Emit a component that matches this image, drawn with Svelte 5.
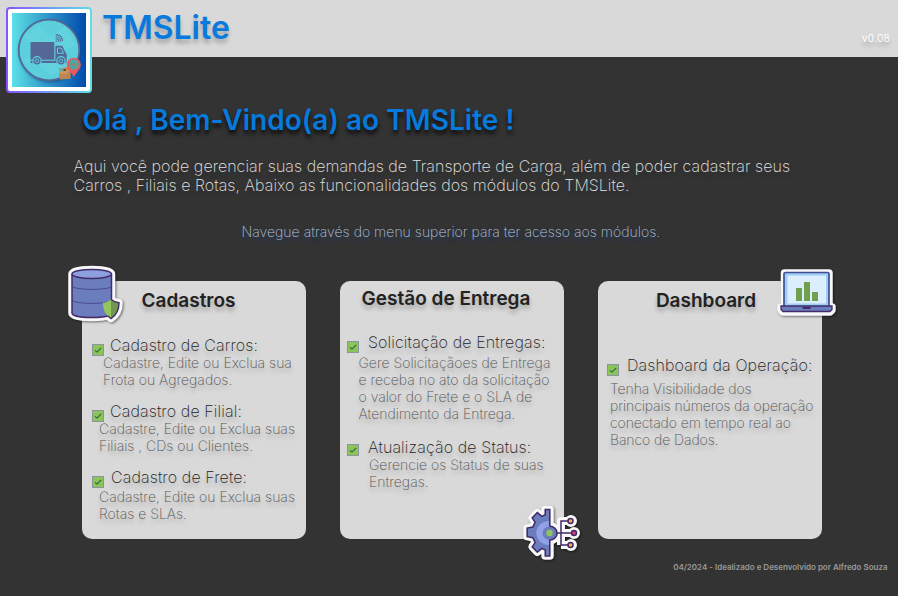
<script>
  const cards = [
    {
      id: 'cadastros', title: 'Cadastros', icon: 'database',
      items: [
        { gap: 0, name: 'Cadastro de Carros:', nameX: 18, textX: 11, textGap: -1, lines: ['Cadastre, Edite ou Exclua sua', 'Frota ou Agregados.'] },
        { gap: 14, name: 'Cadastro de Filial:', nameX: 18, textX: 7, textGap: -1, lines: ['Cadastre, Edite ou Exclua suas', 'Filiais , CDs ou Clientes.'] },
        { gap: 14, name: 'Cadastro de Frete:', nameX: 19, textX: 7, textGap: 1, lines: ['Cadastre, Edite ou Exclua suas', 'Rotas e SLAs.'] }
      ]
    },
    {
      id: 'gestao', title: 'Gestão de Entrega', icon: 'gear',
      items: [
        { gap: 0, name: 'Solicitação de Entregas:', nameX: 27, textX: 17.5, textGap: 2, lines: ['Gere Solicitaçãoes de Entrega', 'e receba no ato da solicitação', 'o valor do Frete e o SLA de', 'Atendimento da Entrega.'] },
        { gap: 16, name: 'Atualização de Status:', nameX: 27, textX: 28, textGap: -1, lines: ['Gerencie os Status de suas', 'Entregas.'] }
      ]
    },
    {
      id: 'dashboard', title: 'Dashboard', icon: 'laptop',
      items: [
        { gap: 0, name: 'Dashboard da Operação:', nameX: 29, textX: 12, textGap: 5, lines: ['Tenha Visibilidade dos', 'principais números da operação', 'conectado em tempo real ao', 'Banco de Dados.'] }
      ]
    }
  ];
</script>

<div class="page">
  <header>
    <div class="logo">
      <svg viewBox="0 0 86 86" width="86" height="86">
        <defs>
          <linearGradient id="frame"><stop offset="0" stop-color="#8552ff" /><stop offset="1" stop-color="#5ee0e6" /></linearGradient>
          <linearGradient id="sea"><stop offset="0" stop-color="#5de0e6" /><stop offset="1" stop-color="#004aad" /></linearGradient>
          <filter id="soft" x="-20%" y="-20%" width="140%" height="140%"><feGaussianBlur stdDeviation="1.5" /></filter>
        </defs>
        <rect width="86" height="86" rx="4" fill="url(#frame)" />
        <rect x="2" y="2" width="82" height="82" rx="2" fill="#fff" />
        <rect x="6" y="6" width="74" height="74" fill="url(#sea)" />
        <circle cx="44" cy="44.5" r="31" fill="#123c70" opacity=".6" filter="url(#soft)" />
        <circle cx="43" cy="43" r="30.3" fill="#5ccfdc" stroke="#536896" stroke-width="1.8" />
        <path d="M18 29 34 18 44 31 59 20 69 37 55 46 68 59 45 68 31 55 17 56 28 42Z" fill="#8af0eb" opacity=".13" />
        <path d="M34 18 28 42 44 31 55 46 31 55 45 68M59 20 44 31M55 46 69 37" fill="none" stroke="#86e6e5" stroke-width=".6" opacity=".25" />
        <g fill="#536896">
          <path d="M24.5 35h23.8v17.8H24.5zM49.4 38.8h6.9l3.4 7.3 1 1.2v6.7H49.4zM24.5 53.8h36v2.1h-36z" />
          <circle cx="31" cy="53.8" r="4.2" stroke="#5ccfdc" stroke-width="1.2" /><circle cx="55" cy="53.8" r="4.2" stroke="#5ccfdc" stroke-width="1.2" />
        </g>
        <path d="M51.5 41h3.8l2.3 5.3h-6.1z" fill="none" stroke="#5ccfdc" stroke-width="1" />
        <circle cx="31" cy="53.8" r="1.8" fill="#536896" stroke="#5ccfdc" stroke-width=".9" /><circle cx="55" cy="53.8" r="1.8" fill="#536896" stroke="#5ccfdc" stroke-width=".9" />
        <circle cx="50.3" cy="34.2" r=".8" fill="#536896" />
        <path d="M49.5 31.8a3 3 0 0 1 3.5 3M49.6 29.7a5.5 5.5 0 0 1 5.3 5M49.7 27.6a7.5 7.5 0 0 1 7 6.2" fill="none" stroke="#536896" stroke-width="1.1" />
        <path d="M55 61.5l8-2 1.6 4v8.2l-10.7.8-1-5.5z" fill="#bd854f" />
        <path d="M53 67l2-5.5 8.5 1.5-3 4z" fill="#cf955c" /><path d="M52 61l4 .5 2 3-4-.2z" fill="#5cb0a8" /><path d="M57.5 62h2.5v2h-2.5z" fill="#5c4b36" />
        <path d="M67.8 50.7a7 7 0 0 0-7 7c0 4.6 5 7.8 7 12.5 2-4.7 7-7.9 7-12.5a7 7 0 0 0-7-7z" fill="#e55b61" />
        <circle cx="67.8" cy="57.5" r="4.9" fill="#38b3ac" />
        <path d="M64 55l7.6 5M64 60l7.4-5M67.8 52.7v9.6M63 57.5h9.6" stroke="#b0756f" stroke-width=".7" />
      </svg>
    </div>
    <div class="brand">TMSLite</div>
    <div class="version">v0.08</div>
  </header>

  <main>
    <h1>Olá , Bem-Vindo(a) ao TMSLite !</h1>
    <p class="intro">Aqui você pode gerenciar suas demandas de Transporte de Carga, além de poder cadastrar seus<br />Carros , Filiais e Rotas, Abaixo as funcionalidades dos módulos do TMSLite.</p>
    <p class="hint">Navegue através do menu superior para ter acesso aos módulos.</p>

    <div class="cards">
      {#each cards as card}
        <section class={card.id}>
          <h2>{card.title}</h2>
          <div class="items">
            {#each card.items as item}
              <article style:margin-top="{item.gap}px">
                <svg class="check" viewBox="0 0 12 12" width="12" height="12">
                  <rect x=".5" y=".5" width="11" height="11" fill="#8dc45a" stroke="#8a95a0" />
                  <path d="M3 6.4 5 8.1 9.2 3.8" fill="none" stroke="#20643c" stroke-width="1.1" />
                </svg>
                <h3 style:padding-left="{item.nameX}px">{item.name}</h3>
                <p style:padding-left="{item.textX}px" style:margin-top="{item.textGap}px">
                  {#each item.lines as line}<span>{line}</span>{/each}
                </p>
              </article>
            {/each}
          </div>

          {#if card.icon === 'database'}
            <svg class="sticker" viewBox="0 0 60 60" width="60" height="60">
              <g fill="#f8f8fa" stroke="#f8f8fa" stroke-width="7.5" stroke-linejoin="round">
                <path d="M6 10C6 4 45.5 4 45.5 10V49C45.5 55 6 55 6 49Z" />
                <path d="M45 35.5c2.5 2 5 3 8 3.2 0 7-2.5 12.3-8 16-5.5-3.7-8-9-8-16 3-.2 5.5-1.2 8-3.2z" />
              </g>
              <path d="M6 10V49C6 55 45.5 55 45.5 49V10" fill="#6c7dbd" stroke="#412b68" stroke-width="1.5" />
              <ellipse cx="25.75" cy="10" rx="19.75" ry="4.500" fill="#8e9fe0" stroke="#412b68" stroke-width="1.5" />
              <path d="M6.5 22c0 4.5 39 4.5 39 0M6.5 36c0 4.5 39 4.5 39 0" fill="none" stroke="#484a8c" stroke-width="1" />
              <path d="M45 35.5c2.5 2 5 3 8 3.2 0 7-2.5 12.3-8 16-5.5-3.7-8-9-8-16 3-.2 5.5-1.2 8-3.2z" fill="#92c65c" />
              <path d="M45 35.5c2.5 2 5 3 8 3.2 0 7-2.5 12.3-8 16z" fill="#729653" />
              <path d="M45 35.5c2.5 2 5 3 8 3.2 0 7-2.5 12.3-8 16l-3-2.7" fill="none" stroke="#412b68" stroke-width="1.4" />
            </svg>
          {:else if card.icon === 'gear'}
            <svg class="sticker" viewBox="0 0 60 56" width="60" height="56">
              <g fill="#f8f8fa" stroke="#f8f8fa" stroke-width="7" stroke-linejoin="round">
                <path transform="translate(-3.3 -1.5) scale(1.13 1.07)" d="M27.5 5.5h-4v5l-3 1.5-4-3.5-4.5 5 2.5 4-2 4.5-5 1v8l5 1 2 4.5-2.5 4 4.5 5 4-3.5 3 1.5v5.5h4V35c8-.5 8-13.5 0-14.5z" />
                <path d="M27 28h26M39 40V16h10M39 40h10" fill="none" stroke-width="8" /><circle cx="49" cy="16" r="2.5" /><circle cx="52" cy="28" r="2.5" /><circle cx="49" cy="40" r="2.5" />
              </g>
              <g transform="translate(-3.3 -1.5) scale(1.13 1.07)">
                <path d="M27.5 5.5h-4v5l-3 1.5-4-3.5-4.5 5 2.5 4-2 4.5-5 1v8l5 1 2 4.5-2.5 4 4.5 5 4-3.5 3 1.5v5.5h4V35z" fill="#6c7dbd" stroke="#412b68" stroke-width="1.4" />
                <path d="M26.8 16.300a11.2 11.2 0 0 0 0 22.4z" fill="#91a1e6" />
                <path d="M27.5 21.3a6.4 6.4 0 0 1 0 12.8a6.4 6.4 0 0 1-6.4-6.4a6.4 6.4 0 0 1 6.4-6.4z" fill="#6c7dbd" />
                <path d="M27.5 21.3a6.4 6.4 0 0 1 0 12.8" fill="none" stroke="#412b68" stroke-width="1.5" />
              </g>
              <circle cx="27.5" cy="28" r="3.2" fill="#8fc65a" />
              <path d="M35 28h17M39 28V16h10M39 28v12h10" fill="none" stroke="#412b68" stroke-width="1.5" />
              <g stroke="#412b68" stroke-width="1.5"><circle cx="48.5" cy="16" r="2.5" fill="#faae48" /><circle cx="52" cy="28" r="2.5" fill="#df3b74" /><circle cx="48.5" cy="40" r="2.5" fill="#faae48" /></g>
            </svg>
          {:else}
            <svg class="sticker" viewBox="0 0 60 54" width="60" height="54">
              <path d="M7.5 7h44.5v34h3v3l-2 2H6l-2-2v-3h3.5z" fill="#f8f8fa" stroke="#f8f8fa" stroke-width="7.5" stroke-linejoin="round" />
              <rect x="7" y="6.5" width="45" height="35" rx="1.5" fill="#9bcff8" stroke="#454d91" stroke-width="1.7" />
              <rect x="10.5" y="9.5" width="38.5" height="28" fill="#dceefe" />
              <path d="M19 22h6v13h-6zM27 16h6v19h-6zM35 26h6v9h-6z" fill="#709f4d" />
              <path d="M4 40h51v3.5l-2 2H6l-2-2z" fill="#6c7dbd" stroke="#412b68" stroke-width="1.3" />
              <path d="M25 41h9l-1 2h-7z" fill="#412b68" />
            </svg>
          {/if}
        </section>
      {/each}
    </div>
  </main>
  <footer>04/2024 - Idealizado e Desenvolvido por Alfredo Souza</footer>
</div>

<style>
  :global(body) { background: #333; }
  .page { box-sizing: border-box; width: 898px; height: 596px; display: flex; flex-direction: column; background: #333; font-family: Inter, sans-serif; overflow: hidden; }
  header { box-sizing: border-box; height: 57px; flex: none; padding: 7px 8px 0 6px; display: flex; background: #d9d9d9; }
  .logo { width: 86px; height: 86px; flex: none; }
  .brand { margin: 1px auto 0 10px; font-size: 32px; line-height: 39px; font-weight: 600; color: #077add; text-shadow: 0 4px 4px rgba(0,0,0,.25); white-space: nowrap; }
  .version { margin-top: 25px; font-size: 10px; line-height: 13px; color: #fff; letter-spacing: .25px; text-shadow: 0 4px 4px rgba(0,0,0,.25); }
  main { padding: 45px 0 0; flex: none; }
  h1, h2, h3, p { margin: 0; white-space: nowrap; }
  h1 { margin-left: 82.5px; height: 36px; line-height: 36px; font-size: 28px; font-weight: 600; letter-spacing: .04px; color: #077add; text-shadow: 0 4px 4px rgba(0,0,0,.8); }
  .intro { margin: 19px 0 0 73.5px; font-size: 16px; line-height: 19px; font-weight: 200; letter-spacing: .05px; color: #e4e4e4; text-shadow: 0 4px 4px rgba(0,0,0,.25); }
  .hint { margin: 28px 0 0 241.5px; font-size: 14px; line-height: 17px; font-weight: 200; letter-spacing: .02px; color: #b7c2d5; text-shadow: 0 3px 4px #1e3c73; }
  .cards { display: flex; gap: 34px; margin: 41px 0 0 82px; }
  section { box-sizing: border-box; position: relative; width: 224px; height: 258px; padding-top: 8px; border-radius: 10px; background: #d9d9d9; text-shadow: 0 4px 4px rgba(0,0,0,.25); }
  h2 { height: 23px; line-height: 23px; font-size: 19px; font-weight: 600; color: #222; text-align: center; margin-right: 11px; }
  .items { padding: 24px 0 0 10px; }
  article { position: relative; }
  .check { position: absolute; left: 0; top: 8px; }
  h3 { font-size: 16px; line-height: 19px; height: 19px; font-weight: 200; letter-spacing: .12px; color: #222; }
  article p { font-size: 14px; line-height: 17px; font-weight: 200; color: #555; }
  article span { display: block; }
  .sticker { position: absolute; overflow: visible; filter: drop-shadow(1px 1px 1px rgba(0,0,0,.5)); }
  .gestao { padding-top: 6px; }
  .gestao h2 { margin-right: 12px; }
  .gestao .items { padding: 23px 0 0 1px; }
  .gestao .check { left: 6px; }
  .gestao article:last-child .check { top: 6px; }
  .dashboard .items { padding: 44px 0 0 0; }
  .dashboard .check { left: 9px; }
  .dashboard p { letter-spacing: -.09px; }
  .cadastros .sticker { left: -16px; top: -17px; }
  .gestao .sticker { left: 182px; top: 224px; }
  .dashboard .sticker { left: 179px; top: -15px; }
  .dashboard h2 { margin-right: 8px; }
  footer { margin: 22px 10.5px 0 auto; font-size: 8px; line-height: 12px; font-weight: 600; letter-spacing: -.01px; color: #999; }
</style>
